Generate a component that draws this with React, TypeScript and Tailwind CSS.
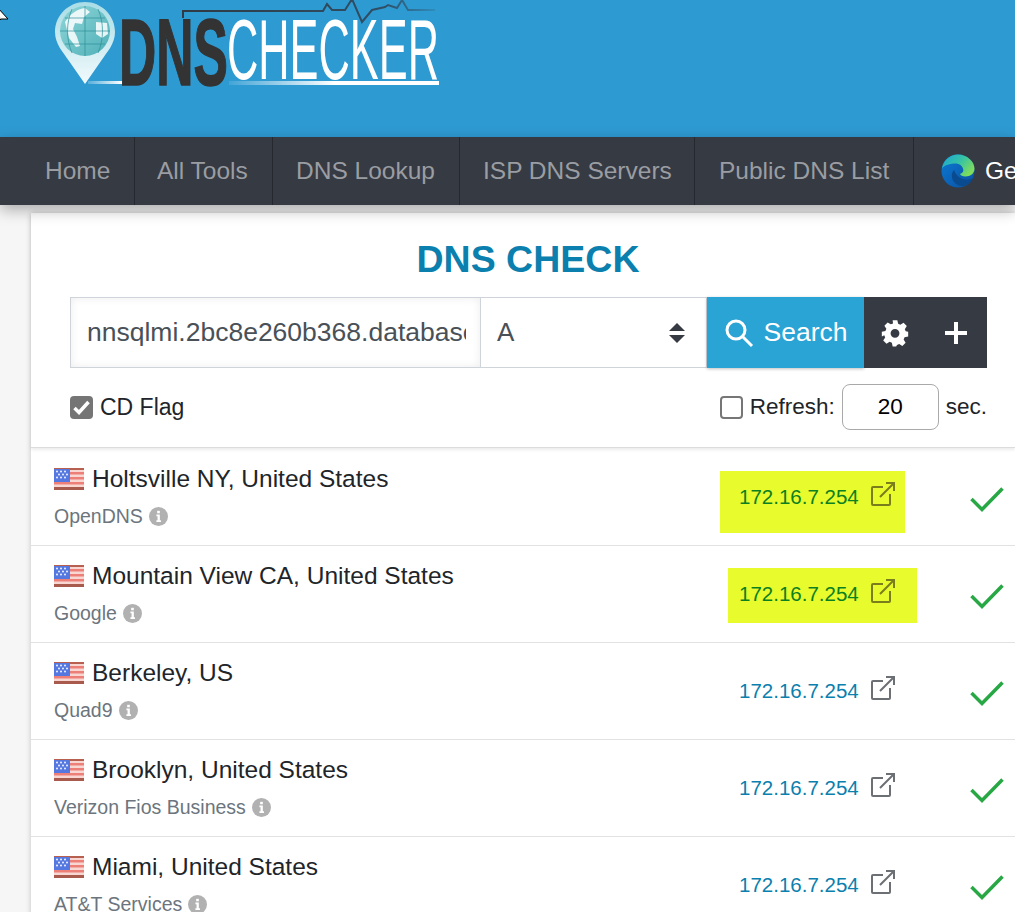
const navItems = [
  { label: 'Home', width: 'w-[135px] pl-[45px]' },
  { label: 'All Tools', width: 'w-[138px] pl-[22px]' },
  { label: 'DNS Lookup', width: 'w-[187px] pl-[23px]' },
  { label: 'ISP DNS Servers', width: 'w-[235px] pl-[23px]' },
  { label: 'Public DNS List', width: 'w-[219px] pl-[24px]' },
];

const rows = [
  { city: 'Holtsville NY, United States', provider: 'OpenDNS', highlight: 'left-[-19px] top-[-12px] w-[185px] h-[62px]' },
  { city: 'Mountain View CA, United States', provider: 'Google', highlight: 'left-[-11px] top-[-12px] w-[189px] h-[55px]' },
  { city: 'Berkeley, US', provider: 'Quad9', highlight: '' },
  { city: 'Brooklyn, United States', provider: 'Verizon Fios Business', highlight: '' },
  { city: 'Miami, United States', provider: 'AT&T Services', highlight: '' },
];

const Logo = () => (
  <svg width="400" height="90" viewBox="0 0 400 90" className="block">
    <defs>
      <linearGradient id="pin" x1="0" y1="0" x2="0" y2="1">
        <stop offset="0" stopColor="#a9dde6" />
        <stop offset="1" stopColor="#f2fafc" />
      </linearGradient>
      <linearGradient id="globe" x1="0" y1="0" x2="1" y2="1">
        <stop offset="0" stopColor="#8ed6d8" />
        <stop offset="1" stopColor="#4fb0b8" />
      </linearGradient>
      <linearGradient id="under" x1="0" y1="0" x2="1" y2="0">
        <stop offset="0" stopColor="#ffffff" stopOpacity="0.2" />
        <stop offset="1" stopColor="#ffffff" />
      </linearGradient>
      <linearGradient id="under2" x1="0" y1="0" x2="1" y2="0">
        <stop offset="0" stopColor="#ffffff" stopOpacity="0.1" />
        <stop offset="0.5" stopColor="#ffffff" />
      </linearGradient>
      <linearGradient id="beat" x1="0" y1="0" x2="1" y2="0">
        <stop offset="0" stopColor="#2f3a44" />
        <stop offset="0.8" stopColor="#2f4f66" />
        <stop offset="1" stopColor="#2f4f66" stopOpacity="0.2" />
      </linearGradient>
    </defs>
    <path d="M30 2C13.500 2 0 15.500 0 32c0 12 8 20 14 29l16 23 16-23c6-9 14-17 14-29C60 15.500 46.500 2 30 2z" fill="url(#pin)" />
    <circle cx="30" cy="31" r="25" fill="url(#globe)" />
    <path d="M10 22c5-8 12-13 20-14l5 4-6 5-2 7-7-1-2 6 4 8 3 9-4 1-7-9-4-16zM41 22l11 1 1 11-6 4-6-4z" fill="#ffffff" opacity="0.85" />
    <path d="M5 31h50M10 18h40M10 44h40M30 6v50M17 9c-6 14-6 30 0 44M43 9c6 14 6 30 0 44" stroke="#2e8f99" strokeWidth="0.7" fill="none" />
    <rect x="33" y="81" width="34" height="3" fill="url(#under)" />
    <path d="M128 18V11h140l4-7 5 6h13l7-11 10 23 10-12 13-3 3-2 9 3 5-8 6 10h27" fill="none" stroke="url(#beat)" strokeWidth="2" />
    <text x="64" y="85" textLength="109" lengthAdjust="spacingAndGlyphs" fontFamily="'Liberation Sans', sans-serif" fontWeight="700" fontSize="95" fill="#333333" stroke="#333333" strokeWidth="1.500">DNS</text>
    <text x="172" y="79" textLength="212" lengthAdjust="spacingAndGlyphs" fontFamily="'Liberation Sans', sans-serif" fontSize="86" fill="#ffffff">CHECKER</text>
    <rect x="174" y="81" width="210" height="4" fill="url(#under2)" />
  </svg>
);

const EdgeIcon = () => (
  <svg width="34" height="34" viewBox="0 0 34 34">
    <defs>
      <linearGradient id="edgeTop" x1="0" y1="0" x2="1" y2="0.6">
        <stop offset="0" stopColor="#1ba3d8" />
        <stop offset="0.55" stopColor="#36c3a5" />
        <stop offset="1" stopColor="#7fdc5c" />
      </linearGradient>
      <linearGradient id="edgeLow" x1="0" y1="0" x2="1" y2="1">
        <stop offset="0" stopColor="#0c7bd6" />
        <stop offset="1" stopColor="#0a4f9e" />
      </linearGradient>
    </defs>
    <circle cx="17" cy="17" r="16.500" fill="url(#edgeLow)" />
    <path d="M1 15C2 6 9 .5 17 .5c9 0 16.500 7 16.500 14 0 5-4 8-9 8-3 0-5-1-5.500-2.500 3-1 4-3 3-5.500C21 11 17 9 13 9.500 7 10 2 12 1 15z" fill="url(#edgeTop)" />
    <path d="M13 16c-3 3-3 9 1 13 3 3 8 4 12 2 3-1.500 5-4 6-7-3 2-7 2-10 1-4-1-7-4-9-9z" fill="#0a4a8f" />
  </svg>
);

const FlagIcon = () => (
  <svg width="30" height="22" viewBox="0 0 30 22" className="block shrink-0">
    <rect width="30" height="22" fill="#f8d6d2" />
    <rect y="0" width="30" height="2" fill="#b8604f" />
    <rect y="4" width="30" height="2.500" fill="#ec8078" />
    <rect y="9" width="30" height="2.500" fill="#ec8078" />
    <rect y="14" width="30" height="2.500" fill="#ec8078" />
    <rect y="19" width="30" height="3" fill="#a85a4c" />
    <rect width="16" height="13" y="1" fill="#5578e0" />
    <g fill="#ffffff">
      <circle cx="3" cy="3.500" r="0.900" />
      <circle cx="7" cy="3.500" r="0.900" />
      <circle cx="11" cy="3.500" r="0.900" />
      <circle cx="5" cy="6.500" r="0.900" />
      <circle cx="9" cy="6.500" r="0.900" />
      <circle cx="13" cy="6.500" r="0.900" />
      <circle cx="3" cy="9.500" r="0.900" />
      <circle cx="7" cy="9.500" r="0.900" />
      <circle cx="11" cy="9.500" r="0.900" />
    </g>
  </svg>
);

const InfoIcon = () => (
  <svg width="19" height="19" viewBox="0 0 20 20" className="shrink-0">
    <circle cx="10" cy="10" r="10" fill="#b1b1b1" />
    <rect x="8.600" y="4" width="2.800" height="2.600" fill="#ffffff" />
    <path d="M7.800 8h3.600v6h1.200v1.800H7.800V14H9v-4.200H7.800z" fill="#ffffff" />
  </svg>
);

const ExternalIcon = ({ color }: { color: string }) => (
  <svg width="24" height="24" viewBox="0 0 24 24" fill="none" stroke={color} strokeWidth="2">
    <path d="M12 5H2a1 1 0 0 0-1 1v16a1 1 0 0 0 1 1h16a1 1 0 0 0 1-1V12" />
    <path d="M9 15 L22.500 1.500 M15 1h8v8" />
  </svg>
);

const CheckIcon = () => (
  <svg width="34" height="26" viewBox="0 0 34 26" fill="none" stroke="#28a745" strokeWidth="3.500">
    <path d="M1.500 13 L12 23.500 L32.500 2.500" />
  </svg>
);

const ResultRow = ({ city, provider, highlight }: { city: string; provider: string; highlight: string }) => (
  <div className="flex h-[97px] border-b border-[#e2e2e2] pl-[23px] relative">
    <div className="flex-1 pt-[14px]">
      <div className="flex items-center gap-2 h-[32px]">
        <FlagIcon />
        <span className="text-[24.500px] text-[#212529] leading-[32px]">{city}</span>
      </div>
      <div className="flex items-center gap-[6px] mt-[7px] text-[19.500px] text-[#6c757d] leading-[28px]">
        {provider}
        <InfoIcon />
      </div>
    </div>
    <div className="w-[275px] pt-[34px] flex">
      <div className="relative flex items-start gap-[12px] h-[28px] ml-[-1px]">
        {highlight && <div className={`absolute bg-[#e8fb2d] ${highlight}`} />}
        <span className={`relative text-[20.500px] leading-[28px] ${highlight ? 'text-[#0b8020]' : 'text-[#0b7fad]'}`}>172.16.7.254</span>
        <span className="relative mt-[-1px]">
          <ExternalIcon color={highlight ? '#7a7d1c' : '#6c6f74'} />
        </span>
      </div>
      <div className="ml-auto mr-[11px] mt-[3px]">
        <CheckIcon />
      </div>
    </div>
  </div>
);

export default function App() {
  return (
    <div className="relative h-[912px] w-[1015px] overflow-hidden bg-[#f6f6f6] font-['Liberation_Sans',Arial,sans-serif]">
      {/* mouse cursor tail */}
      <svg width="10" height="34" viewBox="0 0 10 34" className="absolute left-0 top-0 z-20">
        <path d="M-2 8 L8 19 L1 19 L0 20Z" fill="#ffffff" stroke="#000000" strokeWidth="1" />
      </svg>

      <header className="h-[137px] bg-[#2e9ad2] pl-[55px]">
        <Logo />
      </header>

      <nav className="flex h-[68px] bg-[#363a42] text-[24.500px] text-[#9a9da2] shadow-[0_5px_14px_rgba(0,0,0,0.3)] relative z-10 whitespace-nowrap">
        {navItems.map((item) => (
          <div key={item.label} className={`flex items-center border-r border-[#25282e] shrink-0 ${item.width}`}>
            {item.label}
          </div>
        ))}
        <div className="flex items-center pl-[27px] gap-[10px] text-white">
          <EdgeIcon />
          <span>Get</span>
        </div>
      </nav>

      <main className="ml-[31px] mt-[8px] bg-white shadow-[0_0_6px_rgba(0,0,0,0.2)]">
        <section className="h-[235px] border-b border-[#dcdcdc] shadow-[0_2px_3px_rgba(0,0,0,0.08)] relative">
          <h1 className="pt-[20px] pl-[10px] text-center text-[37.500px] font-bold text-[#0b7fad] leading-[52px]">DNS CHECK</h1>
          <div className="ml-[39px] mt-[12px] flex h-[71px] w-[917px]">
            <div className="w-[411px] h-full border border-[#ced4da] bg-white shadow-[inset_0_0_8px_rgba(0,0,0,0.08)] pl-[16px] pr-[14px] flex items-center text-[26.500px] text-[#495057]">
              <span className="block overflow-hidden whitespace-nowrap">nnsqlmi.2bc8e260b368.database.windows.net</span>
            </div>
            <div className="w-[226px] h-full border-y border-r border-[#ced4da] flex items-center justify-between pl-[16px] pr-[21px] text-[26px] text-[#495057]">
              A
              <svg width="16" height="22" viewBox="0 0 16 22" fill="#363a42">
                <path d="M8 1 L16 9 H0Z" />
                <path d="M8 21 L0 13 H16Z" />
              </svg>
            </div>
            <button className="w-[157px] h-full bg-[#2aa3d5] flex items-center justify-center gap-[10px] text-[26.500px] text-white shadow-[0_1px_3px_rgba(0,0,0,0.25)]">
              <svg width="30" height="30" viewBox="0 0 30 30" fill="none" stroke="#ffffff" strokeWidth="3">
                <circle cx="12" cy="12" r="9" />
                <path d="M18.500 18.500 L28 28" />
              </svg>
              Search
            </button>
            <div className="w-[123px] h-full bg-[#363a42] flex items-center text-white">
              <svg width="28" height="28" viewBox="0 0 24 24" fill="#ffffff" className="ml-[17px]">
                <path fillRule="evenodd" d="M10 1h4l.7 3.100 1.900.8 2.700-1.700 2.800 2.800-1.700 2.700.8 1.900L23.300 11v4l-3.100.7-.8 1.900 1.700 2.700-2.800 2.800-2.700-1.700-1.900.8L13 23.500h-3l-.7-3.100-1.900-.8-2.700 1.700-2.800-2.800 1.700-2.700-.8-1.900L.7 15v-4l3.100-.7.8-1.900-1.700-2.700 2.800-2.800 2.700 1.700 1.900-.8zM12 8.500a3.800 3.800 0 1 0 0 7.600 3.800 3.800 0 0 0 0-7.600z" />
              </svg>
              <svg width="24" height="24" viewBox="0 0 24 24" className="ml-[35px]">
                <path d="M10 1h4v9h9v4h-9v9h-4v-9H1v-4h9z" fill="#ffffff" />
              </svg>
            </div>
          </div>
          <div className="ml-[39px] mt-[16px] flex h-[46px] w-[917px] items-center justify-between text-[#212529]">
            <div className="flex items-center gap-[7px] text-[23px]">
              <span className="flex h-[23px] w-[23px] items-center justify-center rounded-[4px] bg-[#757575]">
                <svg width="17" height="15" viewBox="0 0 17 15" fill="none" stroke="#ffffff" strokeWidth="3.500">
                  <path d="M1.500 8 L6 12.500 L15.500 2" />
                </svg>
              </span>
              CD Flag
            </div>
            <div className="flex items-center text-[22.500px]">
              <span className="h-[23px] w-[23px] rounded-[4px] border-2 border-[#767676] bg-white" />
              <span className="ml-[7px]">Refresh:</span>
              <span className="ml-[7px] flex h-[46px] w-[97px] items-center justify-center rounded-[8px] border border-[#a9a9a9] text-black">20</span>
              <span className="ml-[7px]">sec.</span>
            </div>
          </div>
        </section>
        <div className="pt-[1px]">
          {rows.map((row) => (
            <ResultRow key={row.city} {...row} />
          ))}
        </div>
      </main>
    </div>
  );
}
